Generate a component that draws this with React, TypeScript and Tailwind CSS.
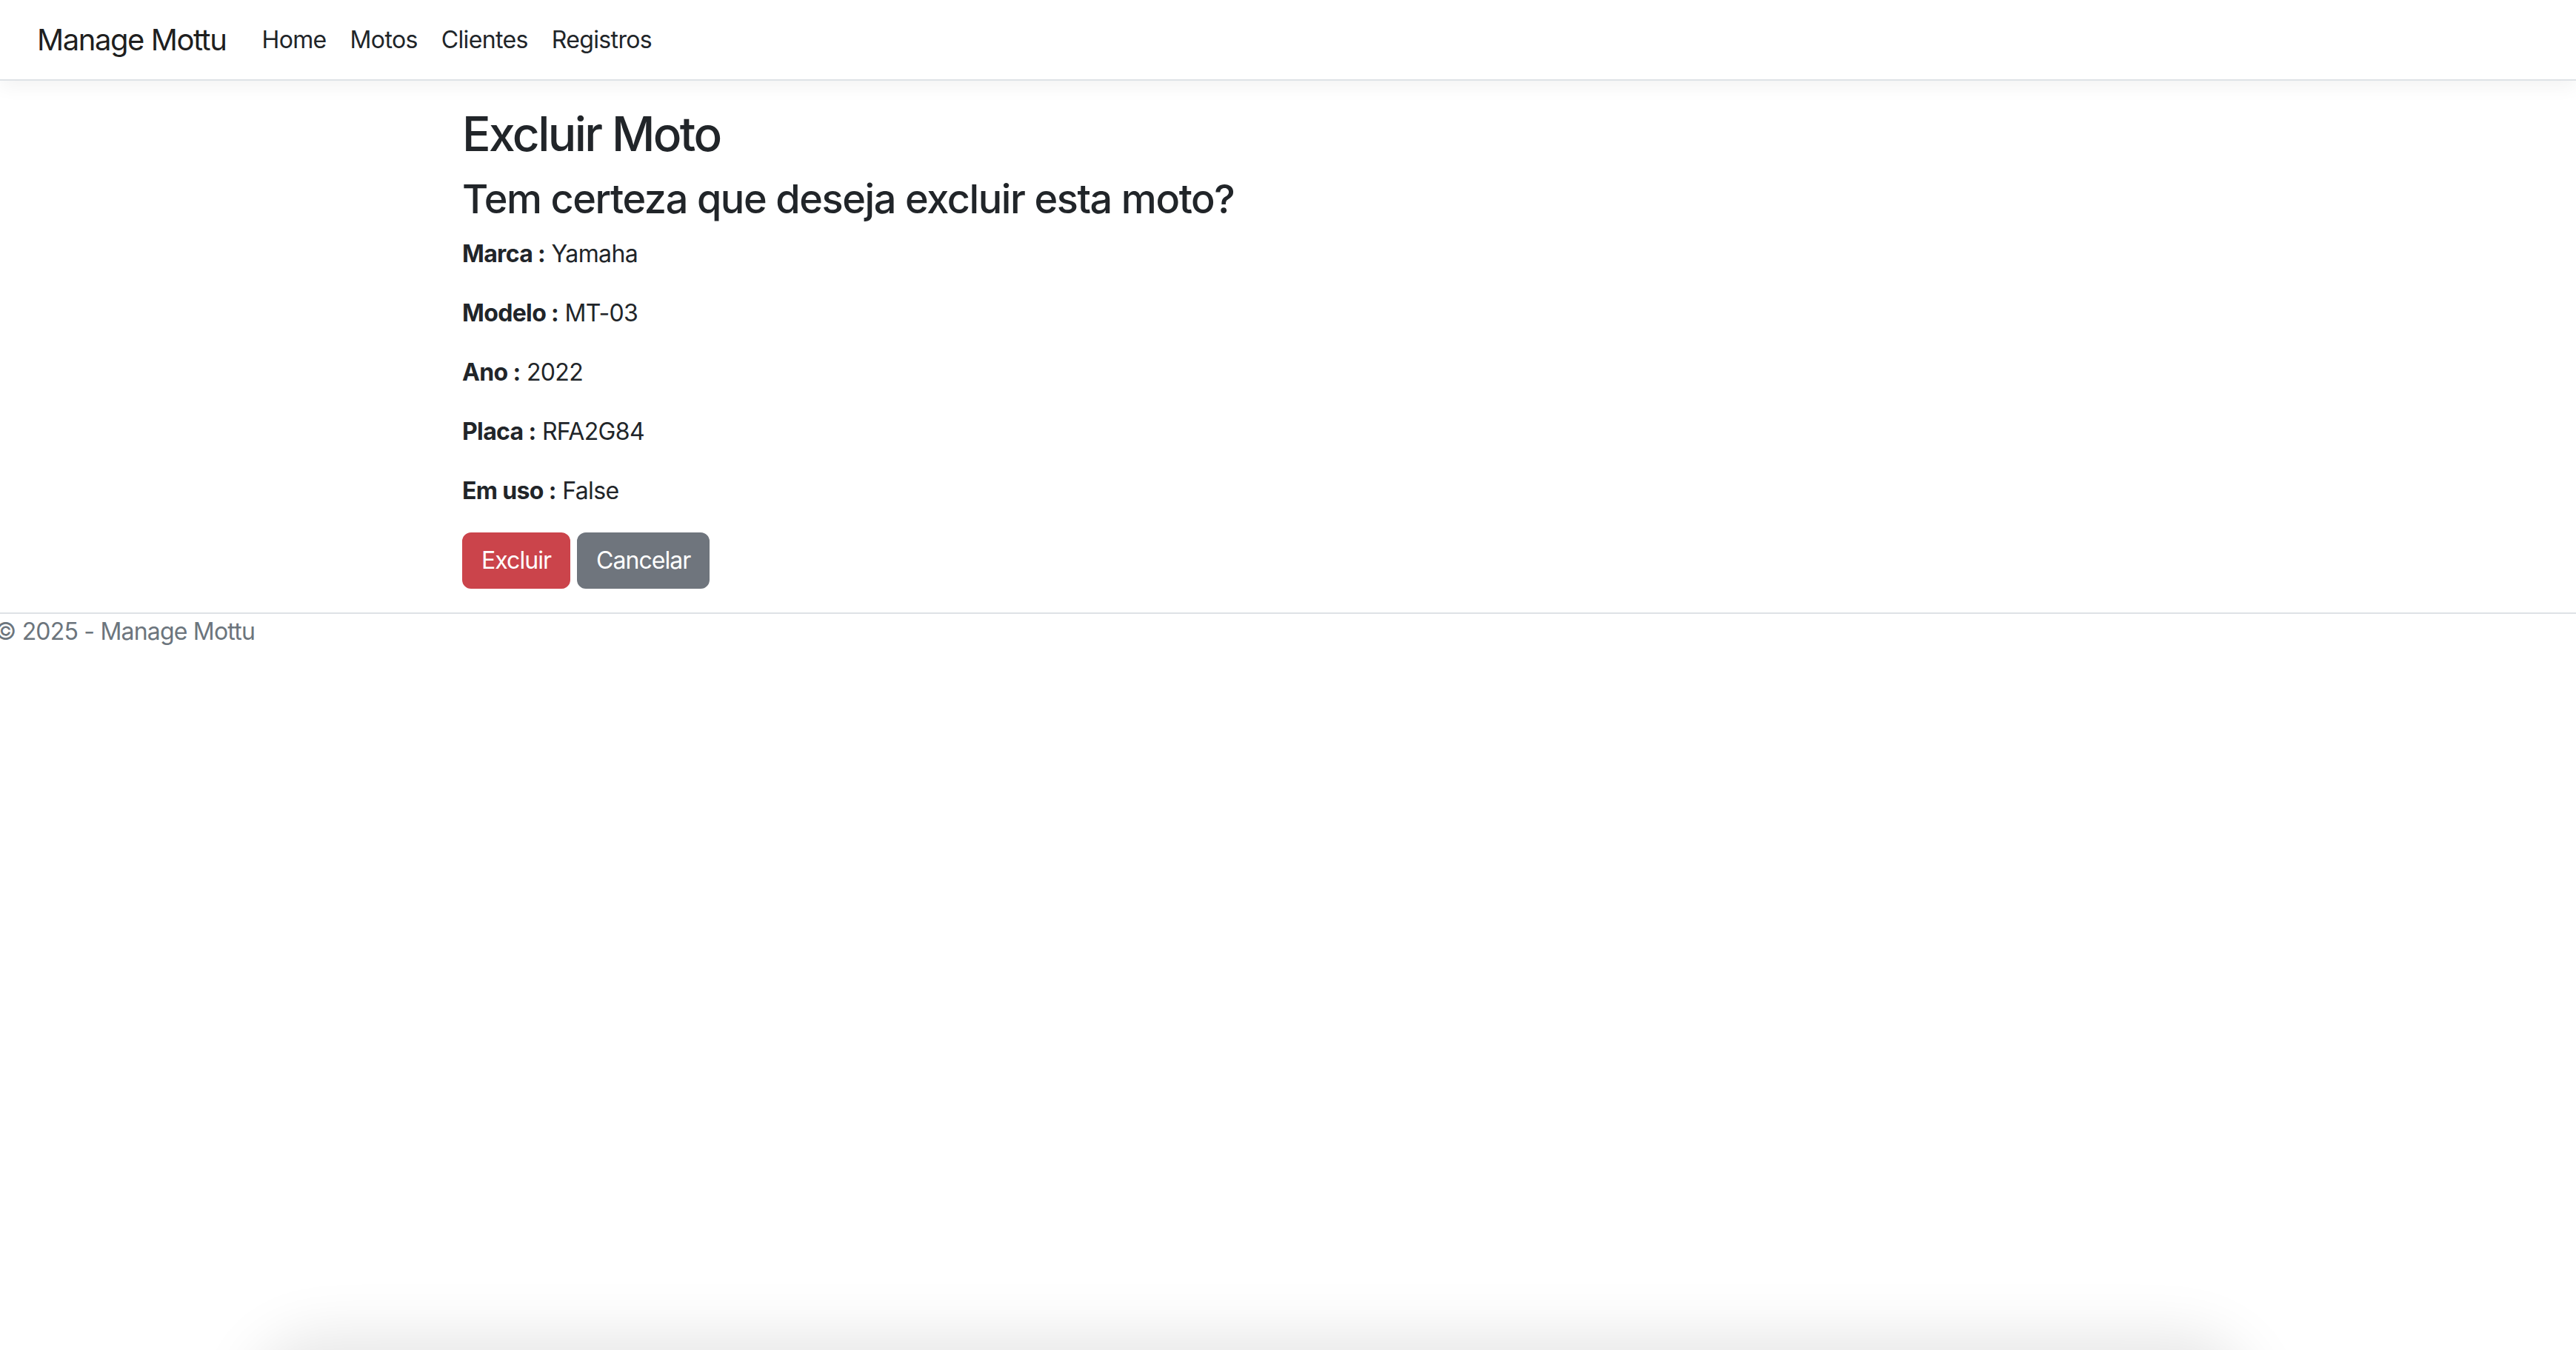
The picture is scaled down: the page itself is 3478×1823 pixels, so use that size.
const links = ['Home', 'Motos', 'Clientes', 'Registros'];

const moto: [string, string][] = [
  ['Marca', 'Yamaha'],
  ['Modelo', 'MT-03'],
  ['Ano', '2022'],
  ['Placa', 'RFA2G84'],
  ['Em uso', 'False'],
];

export default function App() {
  return (
    <div className="min-h-screen bg-white font-['Inter','Liberation_Sans',sans-serif] text-[#212529]">
      <header className="h-[109px] border-b-2 border-[#dee2e6] bg-white shadow-[0_8px_24px_rgba(0,0,0,0.05)]">
        <nav className="flex h-full items-center pl-[50px]">
          <a href="#" className="mr-[32px] text-[40px] leading-[60px] tracking-[-0.036em] text-[rgba(0,0,0,0.9)]">
            Manage Mottu
          </a>
          <ul className="flex">
            {links.map((l) => (
              <li key={l}>
                <a href="#" className="block px-[16px] text-[32px] leading-[48px] tracking-[-0.02em] text-[#212529]">
                  {l}
                </a>
              </li>
            ))}
          </ul>
        </nav>
      </header>

      <main className="mx-auto w-[2230px] pt-[34px] pb-[32px]">
        <h2 className="mb-[16px] text-[64px] leading-[1.2] font-medium tracking-[-0.04em]">Excluir Moto</h2>
        <h3 className="mb-[16px] text-[54px] leading-[1.24] font-medium tracking-[-0.026em]">
          Tem certeza que deseja excluir esta moto?
        </h3>

        {moto.map(([label, value]) => (
          <p key={label} className="mb-[32px] text-[32px] leading-[48px] tracking-[-0.02em]">
            <strong className="font-bold">{label} :</strong> {value}
          </p>
        ))}

        <form className="flex gap-[9px]">
          <button
            type="button"
            className="rounded-[12px] border-2 border-[#cb444b] bg-[#cb444b] px-[24px] py-[12px] text-[32px] leading-[48px] tracking-[-0.03em] text-white"
          >
            Excluir
          </button>
          <a
            href="#"
            className="rounded-[12px] border-2 border-[#6f757d] bg-[#6f757d] px-[24px] py-[12px] text-[32px] leading-[48px] tracking-[-0.03em] text-white"
          >
            Cancelar
          </a>
        </form>
      </main>

      <footer className="border-t-2 border-[#dee2e6] text-[32px] leading-[48px] tracking-[-0.025em] text-[#6c757d]">
        <div className="ml-[-7px]">&copy; 2025 - Manage Mottu</div>
      </footer>

      {/* shadow of something sitting just under the viewport */}
      <div className="pointer-events-none fixed top-full left-[355px] right-[455px] h-[200px] rounded-[80px] shadow-[0_0_80px_20px_rgba(0,0,0,0.1)]" />
    </div>
  );
}
